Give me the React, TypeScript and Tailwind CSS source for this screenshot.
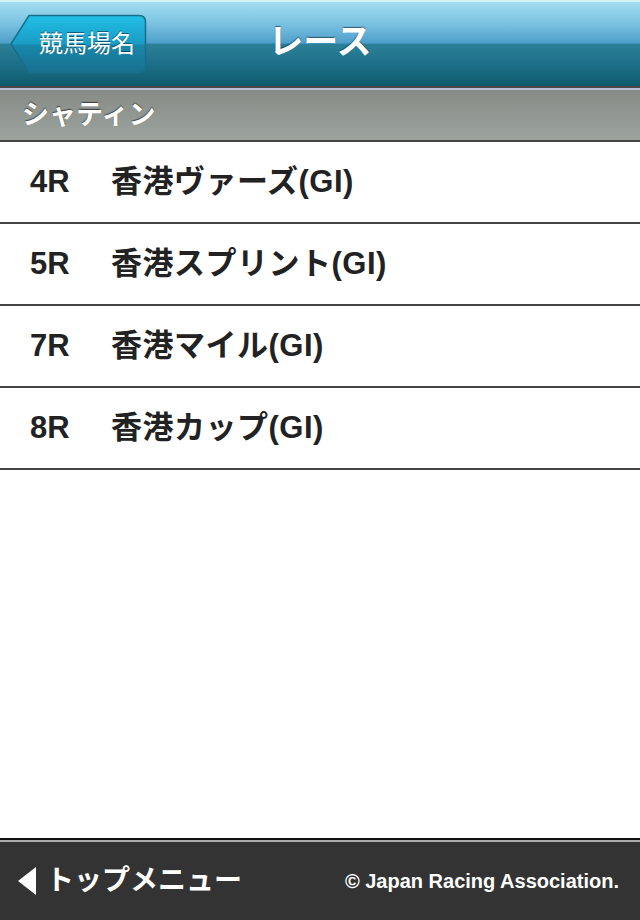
const races = [
  { no: "4R", name: "香港ヴァーズ(GI)" },
  { no: "5R", name: "香港スプリント(GI)" },
  { no: "7R", name: "香港マイル(GI)" },
  { no: "8R", name: "香港カップ(GI)" },
];

const font = "font-['Liberation_Sans','Noto_Sans_CJK_JP',sans-serif]";

function BackButton() {
  return (
    <button className="relative ml-[10px] h-[60px] w-[137px] shrink-0">
      <svg
        className="absolute inset-0"
        width="137"
        height="60"
        viewBox="0 0 137 60"
      >
        <defs>
          <linearGradient id="bb" x1="0" y1="0" x2="0" y2="1">
            <stop offset="0" stopColor="#22bfe6" />
            <stop offset="0.5" stopColor="#1a9cc6" />
            <stop offset="0.52" stopColor="#1887aa" />
            <stop offset="1" stopColor="#19708f" />
          </linearGradient>
        </defs>
        <path
          d="M1 30 L19 1.5 H129 Q135.5 1.5 135.5 8 V52 Q135.5 58.5 129 58.5 H19 Z"
          fill="url(#bb)"
          stroke="#176f8c"
          strokeWidth="1.5"
        />
      </svg>
      <span className="relative block pl-[17px] text-[24px] text-white [text-shadow:0_-1px_0_rgba(0,0,0,0.45)]">
        競馬場名
      </span>
    </button>
  );
}

export default function App() {
  return (
    <div className={`flex h-[920px] w-[640px] flex-col bg-white ${font}`}>
      <header className="relative flex h-[86px] shrink-0 items-center border-t-2 border-[#d2f1f3] bg-[linear-gradient(to_bottom,#a3def1_0%,#7cc3e2_25%,#4d9fcb_49%,#2b8097_50%,#1d6f89_75%,#0d5a6c_100%)]">
        <BackButton />
        <h1 className="absolute left-0 right-0 top-[18px] text-center text-[35px] font-bold leading-[44px] text-white [text-shadow:0_-1px_1px_rgba(0,0,0,0.5)]">
          レース
        </h1>
      </header>
      <div className="h-[2px] bg-[#4a4a4a]" />
      <div className="h-[2px] bg-[#b9bdd8]" />
      <div className="flex h-[50px] items-center bg-[linear-gradient(to_bottom,#878b86,#9ca39e)] pl-[22px] text-[27px] font-bold text-white [text-shadow:0_-1px_1px_rgba(0,0,0,0.6)]">
        シャティン
      </div>
      <div className="h-[2px] bg-[#444444]" />
      <ul>
        {races.map((r) => (
          <li
            key={r.no}
            className="flex h-[82px] items-center border-b-2 border-[#444444] pl-[30px] text-[31px] font-bold text-[#222222]"
          >
            <span className="w-[81px]">{r.no}</span>
            <span className="tracking-[0.5px]">{r.name}</span>
          </li>
        ))}
      </ul>
      <div className="flex-1" />
      <div className="h-[2px] bg-[#111111]" />
      <div className="h-[2px] bg-[#a9a9a9]" />
      <footer className="flex h-[78px] items-center justify-between bg-[#333333] pl-[18px] pr-[21px] text-white">
        <div className="flex items-center gap-[10px] text-[28px] font-bold">
          <svg width="18" height="28" viewBox="0 0 18 28">
            <path d="M18 0 V28 L0 14 Z" fill="#ffffff" />
          </svg>
          <span>トップメニュー</span>
        </div>
        <span className="text-[20px] font-bold">© Japan Racing Association.</span>
      </footer>
    </div>
  );
}
